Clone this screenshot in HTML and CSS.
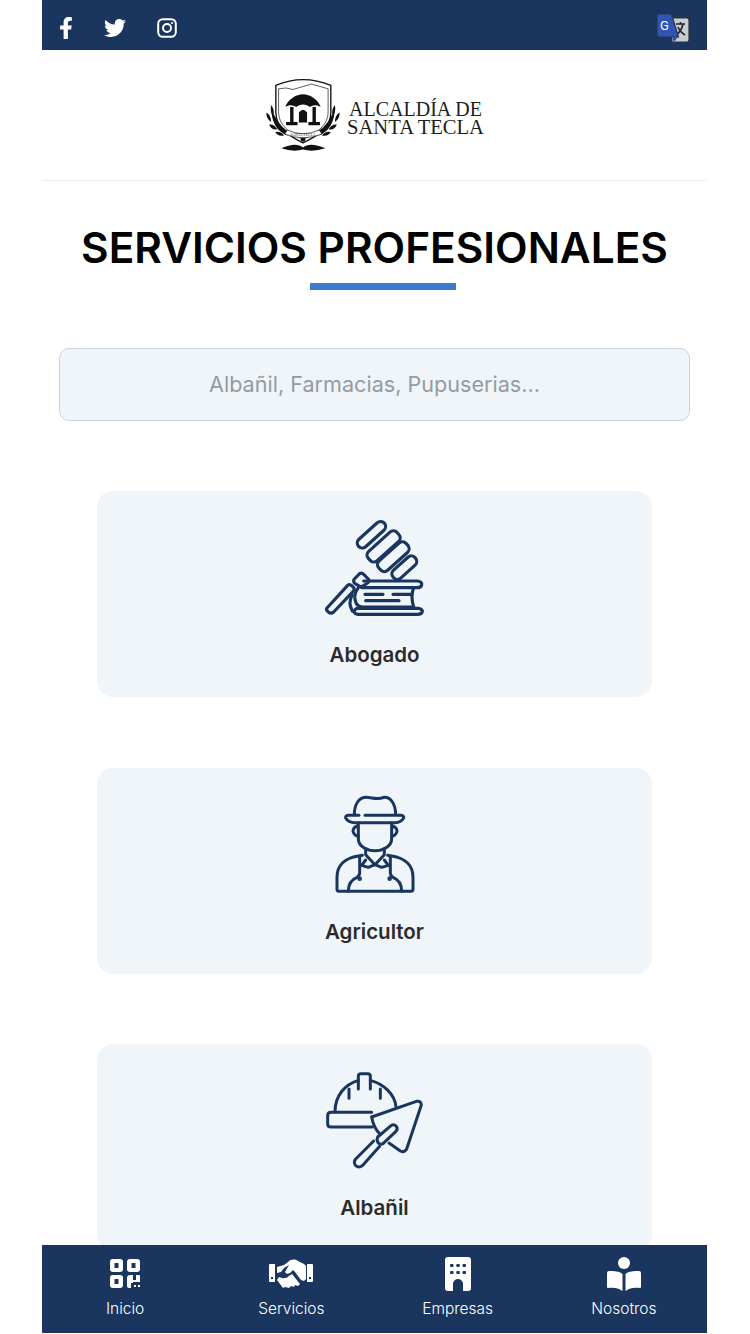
FILE: index.html
```html
<!DOCTYPE html>
<html lang="en">
<head>
    <meta charset="UTF-8">
    <meta name="viewport" content="width=device-width, initial-scale=1.0">
    <title>Servicios Profesionales</title>
    <link rel="stylesheet" href="styles.css">
</head>
<body>
    <div class="app">
        <!-- Top bar -->
        <header class="top-bar">
            <div class="social-links">
                <svg class="icon-fb" viewBox="0 0 320 512"><path fill="#fff" d="M279.14 288l14.22-92.66h-88.91v-60.13c0-25.35 12.42-50.06 52.24-50.06h40.42V6.26S260.43 0 225.36 0c-73.22 0-121.08 44.38-121.08 124.72v70.62H22.89V288h81.39v224h100.17V288z"/></svg>
                <svg class="icon-tw" viewBox="0 0 512 512"><path fill="#fff" d="M459.37 151.716c.325 4.548.325 9.097.325 13.645 0 138.72-105.583 298.558-298.558 298.558-59.452 0-114.68-17.219-161.137-47.106 8.447.974 16.568 1.299 25.34 1.299 49.055 0 94.213-16.568 130.274-44.832-46.132-.975-84.792-31.188-98.112-72.772 6.498.974 12.995 1.624 19.818 1.624 9.421 0 18.843-1.3 27.614-3.573-48.081-9.747-84.143-51.98-84.143-102.985v-1.299c13.969 7.797 30.214 12.67 47.431 13.319-28.264-18.843-46.781-51.005-46.781-87.391 0-19.492 5.197-37.36 14.294-52.954 51.655 63.675 129.3 105.258 216.365 109.807-1.624-7.797-2.599-15.918-2.599-24.04 0-57.828 46.782-104.934 104.934-104.934 30.213 0 57.502 12.67 76.67 33.137 23.715-4.548 46.456-13.32 66.599-25.34-7.798 24.366-24.366 44.833-46.132 57.827 21.117-2.273 41.584-8.122 60.426-16.243-14.292 20.791-32.161 39.308-52.628 54.253z"/></svg>
                <svg class="icon-ig" viewBox="0 0 20 20" fill="none" stroke="#fff" stroke-width="2"><rect x="1.2" y="1.2" width="17.6" height="17.6" rx="4.6"/><circle cx="10" cy="10" r="4"/><circle cx="15" cy="5" r="1.1" fill="#fff" stroke="none"/></svg>
            </div>
            <svg class="icon-translate" viewBox="0 0 34 30">
                <path d="M14 5h17q2 0 2 2v20q0 2-2 2H16z" fill="#c9ccd1" stroke="#2d3238" stroke-width="1.2"/>
                <path d="M20 11h9M24.500 9v2M27 11c-1 5-4 9-7 11M22 14c1 3 4 6 7 8" fill="none" stroke="#22262b" stroke-width="1.6"/>
                <path d="M1 1h14.500l7 23H3q-2 0-2-2z" fill="#2f55b5" stroke="#2b3447" stroke-width="1.200"/>
                <path d="M16 24h6l-4 5z" fill="#2f55b5"/>
                <text x="4" y="17" class="translate-g">G</text>
            </svg>
        </header>

        <!-- Logo -->
        <div class="logo-row">
            <svg class="crest" viewBox="18 20 224 222" preserveAspectRatio="none">
                <g fill="none" stroke="#111">
                    <path d="M50 42Q130 8 212 42V122C212 165 178 190 130 212C84 190 50 165 50 122Z" stroke-width="4"/>
                    <path d="M58 52Q80 46 100 54L155 38L204 52V120C204 160 172 182 130 202C90 182 58 160 58 120Z" stroke-width="2"/>
                </g>
                <path d="M78 106C84 84 110 68 130 68C150 68 176 84 182 106C170 98 160 100 150 106C140 96 120 96 110 106C100 100 90 98 78 106Z" fill="#111"/>
                <path d="M92 106H102V150H92ZM158 106H168V150H158Z" fill="#111"/>
                <path d="M118 152V122Q130 106 142 122V152Z" fill="#111"/>
                <path d="M80 150H114V160H80ZM146 150H180V160H146Z" fill="#111"/>
                <g fill="#111">
                    <path d="M84 190Q36 172 36 104Q46 150 88 180Z"/>
                    <path d="M176 190Q224 172 224 104Q214 150 172 180Z"/>
                    <path d="M22 122Q36 130 36 150Q22 142 22 122ZM30 158Q46 156 54 172Q38 176 30 158ZM48 180Q64 176 74 190Q56 194 48 180ZM36 100Q48 114 42 132Q32 120 36 100Z"/>
                    <path d="M238 122Q224 130 224 150Q238 142 238 122ZM230 158Q214 156 206 172Q222 176 230 158ZM212 180Q196 176 186 190Q204 194 212 180ZM224 100Q212 114 218 132Q228 120 224 100Z"/>
                    <path d="M66 228Q110 208 130 226Q150 208 196 228Q160 240 130 232Q100 240 66 228Z"/>
                    <circle cx="130" cy="202" r="7"/>
                </g>
                <path d="M84 174Q130 196 178 174L186 186Q130 208 76 186Z" fill="#fff" stroke="#111" stroke-width="2"/>
                <text x="130" y="192" class="crest-text">SANTA TECLA</text>
            </svg>
            <div class="logo-name">
                <div class="logo-line-top">ALCALDÍA DE</div>
                <div class="logo-line-bottom">SANTA TECLA</div>
            </div>
        </div>

        <main class="content">
            <h1 class="page-title">SERVICIOS PROFESIONALES</h1>
            <div class="title-line"></div>

            <div class="search-box">Albañil, Farmacias, Pupuserias...</div>

            <div class="card-list">
                <div class="card">
                    <svg class="card-icon" viewBox="0 -6 360 330" fill="none" stroke="#1a365f" stroke-width="9.500" stroke-linecap="round" stroke-linejoin="round">
                        <rect x="118" y="44" width="104" height="30" rx="15" transform="rotate(-42 170 60)"/>
                        <rect x="148" y="76" width="116" height="38" rx="15" transform="rotate(-42 205 95)"/>
                        <rect x="180" y="106" width="110" height="38" rx="15" transform="rotate(-42 235 125)"/>
                        <rect x="224" y="142" width="88" height="32" rx="15" transform="rotate(-42 268 158)"/>
                        <path d="M36 279L98 211Q104 206 110 212L116 218Q120 224 114 230L56 291Q48 298 40 291Q32 285 36 279Z"/>
                        <path d="M118 192L134 176Q140 172 146 178L160 192Q164 198 158 204L142 214Q136 216 130 212L118 204Q114 198 118 192Z"/>
                        <path d="M146 198H308Q322 200 320 210Q318 218 306 218H140"/>
                        <path d="M130 218Q112 240 124 266Q130 276 144 276H296"/>
                        <path d="M296 218Q286 244 296 276"/>
                        <path d="M126 280H310Q324 284 322 290Q320 298 308 298H130Q116 296 118 288Q120 282 126 280Z"/>
                        <path d="M150 238H204M234 238H288M152 257H252"/>
                        <path d="M112 240Q98 262 112 288"/>
                    </svg>
                    <div class="card-label">Abogado</div>
                </div>
                <div class="card">
                    <svg class="card-icon" viewBox="0 0 300 330" fill="none" stroke="#1a365f" stroke-width="9" stroke-linecap="round" stroke-linejoin="round">
                        <path d="M88 74C88 42 102 22 124 22C140 22 158 30 176 22C198 20 212 44 212 74"/>
                        <path d="M120 76H228Q238 78 236 84Q228 98 210 98H90Q70 98 62 84Q60 78 68 76H102"/>
                        <path d="M100 98V146C100 170 128 182 150 182C172 182 200 170 200 146V98"/>
                        <path d="M98 108Q84 112 84 124Q88 138 100 138M202 108Q216 112 216 124Q212 138 200 138"/>
                        <path d="M122 176V194L150 224L178 194V176"/>
                        <path d="M112 196L100 198C60 204 36 226 36 262V298Q36 304 42 304H258Q264 304 264 298V262C264 226 240 204 200 198L188 196"/>
                        <path d="M104 200V248Q104 256 96 262Q70 272 70 304M196 200V248Q196 256 204 262Q230 272 230 304"/>
                        <path d="M122 210L110 226L130 232L150 224L170 232L190 226L178 210"/>
                        <circle cx="104" cy="266" r="2.500" fill="#1a365f"/>
                        <circle cx="194" cy="266" r="2.500" fill="#1a365f"/>
                    </svg>
                    <div class="card-label">Agricultor</div>
                </div>
                <div class="card">
                    <svg class="card-icon" viewBox="0 3 360 330" fill="none" stroke="#1a365f" stroke-width="9" stroke-linecap="round" stroke-linejoin="round">
                        <path d="M60 140C60 92 90 58 130 46V34Q130 26 138 26H158Q166 26 166 34V46C205 56 240 88 243 126"/>
                        <path d="M102 72V100M130 46V72M166 46V72M196 72V100"/>
                        <path d="M170 142H48Q38 142 38 152V176Q38 186 48 186H172"/>
                        <path d="M170 156L304 109Q318 106 319 120L275 252Q268 264 256 258L222 234"/>
                        <path d="M170 156Q176 190 196 208"/>
                        <path d="M188 216L228 182Q236 176 244 184Q250 192 242 200L204 236Q196 240 190 234Q184 226 188 216Z"/>
                        <path d="M176 228L122 282Q114 292 122 302Q132 310 142 302L194 244"/>
                    </svg>
                    <div class="card-label">Albañil</div>
                </div>
            </div>
        </main>

        <!-- Bottom menu -->
        <nav class="bottom-nav">
            <div class="nav-item">
                <svg class="nav-icon" viewBox="0 -2 30 34" fill="#fff">
                    <path fill-rule="evenodd" d="M3 0h7a3 3 0 0 1 3 3v7a3 3 0 0 1-3 3H3a3 3 0 0 1-3-3V3a3 3 0 0 1 3-3zM4.500 4v5h4V4zM20 0h7a3 3 0 0 1 3 3v7a3 3 0 0 1-3 3h-7a3 3 0 0 1-3-3V3a3 3 0 0 1 3-3zM21.500 4v5h4V4zM3 16h7a3 3 0 0 1 3 3v7a3 3 0 0 1-3 3H3a3 3 0 0 1-3-3v-7a3 3 0 0 1 3-3zM4.500 20v5h4v-5z"/>
                    <path d="M17 19a3 3 0 0 1 3-3h3v5h3v-5h3q1 0 1 1v6h-7v1h-2v5h-2a2 2 0 0 1-2-2zM24 26h2v2h-2zM28 26h2v2h-2z"/>
                </svg>
                <span>Inicio</span>
            </div>
            <div class="nav-item">
                <svg class="nav-icon nav-icon-wide" viewBox="0 -2 44 34" fill="#fff">
                    <path fill-rule="evenodd" d="M1 5h5v18H1q-1 0-1-1V6q0-1 1-1zM2 18v2h2v-2z"/>
                    <path fill-rule="evenodd" d="M38 5h5q1 0 1 1v16q0 1-1 1h-5zM40 18v2h2v-2z"/>
                    <path d="M8 8l7-2 4-3c3-3 7-3 10-1l6 3 2 2v13l-2 2-3-1-6-8-2-2-3 3q-4 2-5-1l4-7-5 3-3 4-4 1z"/>
                    <path d="M8 21l2-3 3 1q4 1 7-2l3-2 8 10-2 2-3-1-1 2-3-1-2 2-4-1-2 1z"/>
                </svg>
                <span>Servicios</span>
            </div>
            <div class="nav-item">
                <svg class="nav-icon" viewBox="0 0 26 34">
                    <path fill="#fff" d="M3 0h20a3 3 0 0 1 3 3v28a3 3 0 0 1-3 3h-5v-7a5 5 0 0 0-10 0v7H3a3 3 0 0 1-3-3V3a3 3 0 0 1 3-3z"/>
                    <g fill="#1a365f">
                        <rect x="5" y="7" width="3.500" height="3" rx="1"/><rect x="11.300" y="7" width="3.500" height="3" rx="1"/><rect x="17.500" y="7" width="3.500" height="3" rx="1"/>
                        <rect x="5" y="14" width="3.500" height="3" rx="1"/><rect x="11.300" y="14" width="3.500" height="3" rx="1"/><rect x="17.500" y="14" width="3.500" height="3" rx="1"/>
                    </g>
                </svg>
                <span>Empresas</span>
            </div>
            <div class="nav-item">
                <svg class="nav-icon" viewBox="0 0 34 34" fill="#fff">
                    <circle cx="17" cy="6" r="6"/>
                    <path d="M15.500 17v17C12 31 6 30 1 31q-1 0-1-1V16q0-2 2-2c5 0 10 0 13.500 3z"/>
                    <path d="M18.500 17v17c3.500-3 9.500-4 14.500-3q1 0 1-1V16q0-2-2-2c-5 0-10 0-13.500 3z"/>
                </svg>
                <span>Nosotros</span>
            </div>
        </nav>
    </div>
</body>
</html>
```

FILE: styles.css
```css
body {
    font-family: 'Inter', 'Noto Sans', sans-serif;
    margin: 0;
    background-color: #fff;
    height: 1334px;
    overflow: hidden;
}

.app {
    position: relative;
    width: 665px;
    height: 1333px;
    margin-left: 42px;
    overflow: hidden;
    background-color: #fff;
}

/* Top bar */
.top-bar {
    display: flex;
    justify-content: space-between;
    align-items: center;
    height: 50px;
    box-sizing: border-box;
    padding: 6px 17px 0 17px;
    background-color: #1a365f;
}

.social-links {
    display: flex;
    align-items: center;
}

.icon-fb {
    width: 14px;
    height: 22px;
}

.icon-tw {
    width: 22px;
    height: 22px;
    margin-left: 31px;
}

.icon-ig {
    width: 20px;
    height: 20px;
    margin-left: 31px;
}

.icon-translate {
    width: 34px;
    height: 30px;
}

.translate-g {
    font-family: 'Roboto', sans-serif;
    font-size: 13px;
    fill: #fff;
}

/* Logo */
.logo-row {
    display: flex;
    justify-content: center;
    align-items: center;
    height: 130px;
    border-bottom: 1px solid #ececec;
    box-sizing: content-box;
}

.crest {
    width: 76px;
    height: 75px;
    margin-right: 6px;
}

.crest-text {
    font-family: 'Liberation Serif', serif;
    font-size: 11px;
    text-anchor: middle;
    fill: #111;
}

.logo-name {
    font-family: 'Liberation Serif', serif;
    color: #1d1d1d;
    padding-top: 6px;
    white-space: nowrap;
    text-align: center;
}

.logo-line-top {
    font-size: 20px;
    line-height: 18px;
}

.logo-line-bottom {
    font-size: 20.600px;
    line-height: 18px;
}

/* Main content */
.content {
    display: flex;
    flex-direction: column;
    align-items: center;
}

.page-title {
    margin: 43px 0 0;
    font-size: 42.400px;
    line-height: 48px;
    font-weight: 600;
    color: #000;
    white-space: nowrap;
}

.title-line {
    width: 146px;
    height: 7px;
    margin: 11px 0 0 17px;
    background-color: #3a7bd0;
}

.search-box {
    width: 631px;
    height: 73px;
    margin: 58px 0 0;
    padding-bottom: 2px;
    box-sizing: border-box;
    display: flex;
    justify-content: center;
    align-items: center;
    background-color: #f0f5fa;
    border: 1.500px solid #cbd3dc;
    border-radius: 10px;
    color: #969ba1;
    font-size: 21.600px;
}

.card-list {
    display: flex;
    flex-direction: column;
    gap: 70.500px;
    margin-top: 70px;
}

.card {
    width: 555px;
    height: 206px;
    display: flex;
    flex-direction: column;
    align-items: center;
    box-sizing: border-box;
    padding-top: 22px;
    background-color: #f0f5fa;
    border-radius: 16px;
}

.card-icon {
    height: 110px;
    width: auto;
}

.card-label {
    margin-top: 18px;
    font-size: 20.500px;
    line-height: 28px;
    font-weight: 600;
    color: #2b2b2b;
}

/* Bottom menu */
.bottom-nav {
    position: absolute;
    left: 0;
    right: 0;
    bottom: 0;
    height: 88px;
    display: grid;
    grid-template-columns: repeat(4, 1fr);
    background-color: #1a365f;
}

.nav-item {
    display: flex;
    flex-direction: column;
    align-items: center;
    padding-top: 12px;
    color: #fff;
    font-size: 15.500px;
    font-weight: 300;
    line-height: 20px;
}

.nav-icon {
    width: 34px;
    height: 34px;
    margin-bottom: 8px;
}

.nav-icon-wide {
    width: 44px;
}
```
